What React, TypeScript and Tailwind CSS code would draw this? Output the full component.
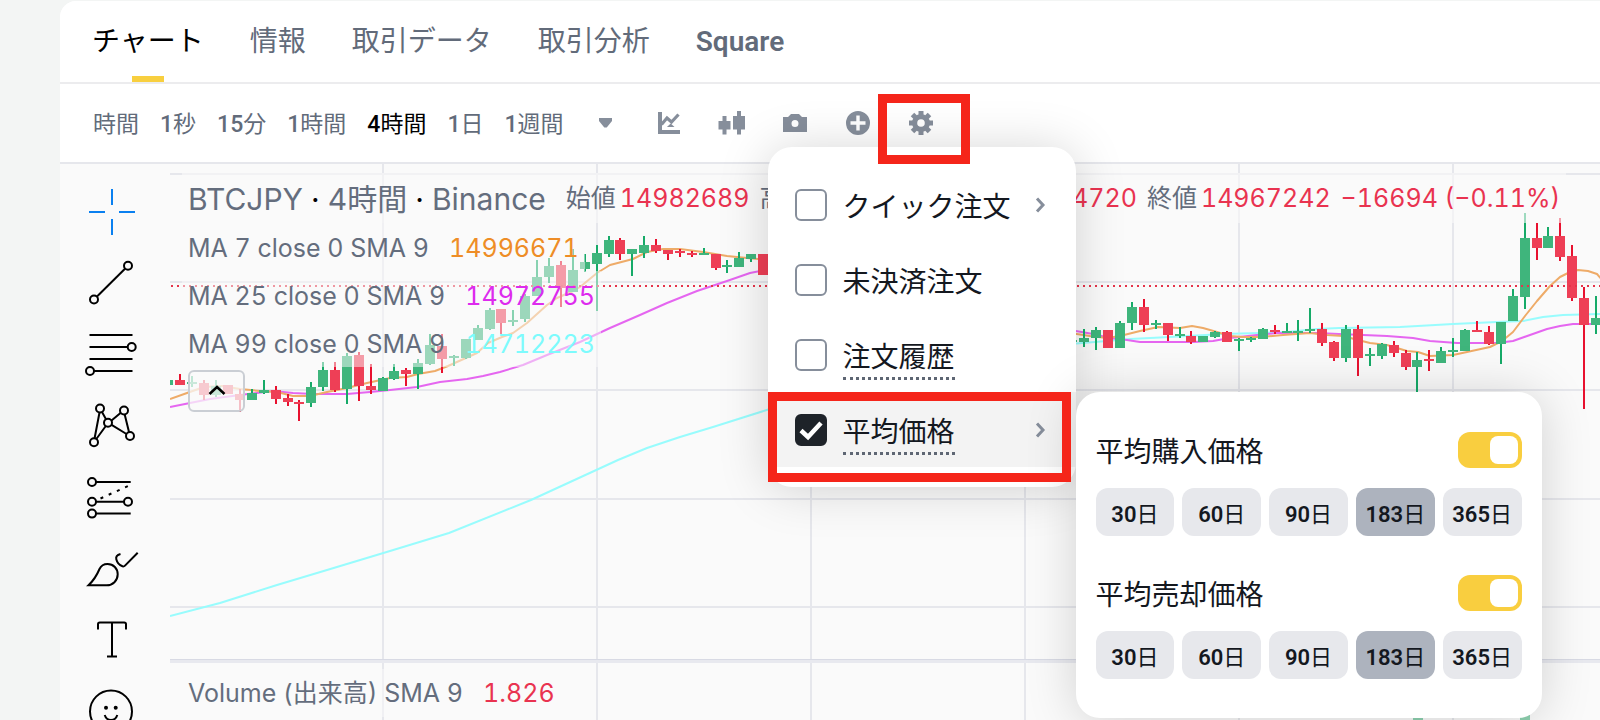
import { useState } from 'react';
import type { ReactNode } from 'react';
import { clsx } from 'clsx';

// center x, high, low, body top, body bottom, up?
type Candle = [number, number, number, number, number, 0 | 1];

const CANDLES: Candle[] = [
  [168, 380, 385, 380, 385, 1], [180, 374, 385, 380, 385, 0], [192, 376, 387, 382, 384, 1],
  [204, 380, 400, 383, 395, 0], [216, 380, 397, 386, 395, 1], [228, 385, 394, 385, 394, 0],
  [240, 389, 412, 394, 400, 0], [252, 389, 400, 393, 400, 1], [264, 380, 394, 390, 393, 1],
  [276, 386, 404, 390, 399, 0], [288, 394, 406, 398, 402, 0], [299, 400, 421, 402, 404, 0],
  [311, 382, 407, 387, 403, 1], [323, 362, 391, 370, 387, 1], [335, 362, 392, 370, 390, 0],
  [347, 353, 404, 356, 389, 1], [359, 352, 401, 355, 386, 0], [371, 364, 394, 386, 390, 0],
  [383, 377, 391, 378, 391, 1], [394, 364, 380, 371, 379, 1], [406, 368, 386, 370, 374, 0],
  [418, 359, 389, 363, 374, 1], [430, 334, 365, 345, 364, 1], [442, 334, 373, 346, 359, 0],
  [454, 355, 366, 356, 358, 1], [466, 339, 359, 339, 358, 1], [478, 325, 340, 328, 340, 1],
  [490, 308, 330, 310, 329, 1], [501, 309, 334, 309, 323, 0], [513, 310, 326, 320, 322, 1],
  [525, 294, 322, 296, 319, 1], [537, 260, 296, 277, 296, 1], [549, 258, 283, 266, 277, 1],
  [561, 261, 307, 265, 288, 0], [573, 249, 292, 270, 292, 1], [585, 254, 272, 262, 269, 1],
  [597, 245, 311, 253, 264, 1], [609, 236, 257, 240, 254, 1], [620, 238, 260, 240, 254, 0],
  [632, 249, 276, 249, 254, 1], [644, 236, 258, 245, 253, 1], [656, 239, 253, 245, 251, 0],
  [668, 250, 260, 250, 254, 0], [680, 249, 257, 251, 253, 0], [692, 251, 257, 253, 255, 0],
  [704, 248, 255, 253, 255, 1], [716, 254, 270, 254, 268, 0], [727, 260, 273, 265, 267, 1],
  [739, 252, 267, 258, 267, 1], [751, 254, 262, 254, 259, 1], [763, 254, 275, 254, 275, 0],
  [1072, 340, 342, 340, 342, 1], [1084, 329, 347, 338, 342, 1], [1096, 327, 350, 330, 338, 1],
  [1108, 330, 348, 330, 348, 0], [1120, 321, 348, 323, 348, 1], [1132, 302, 330, 307, 323, 1],
  [1144, 299, 332, 307, 325, 0], [1156, 320, 329, 323, 324, 1], [1168, 323, 341, 323, 335, 0],
  [1180, 327, 338, 334, 336, 1], [1191, 331, 344, 336, 342, 0], [1203, 336, 342, 336, 342, 1],
  [1215, 331, 338, 332, 337, 1], [1227, 331, 342, 332, 342, 0], [1239, 338, 351, 339, 341, 1],
  [1251, 337, 342, 338, 339, 1], [1263, 328, 339, 329, 339, 1], [1275, 325, 334, 330, 332, 0],
  [1287, 323, 333, 331, 332, 1], [1298, 320, 341, 331, 332, 1], [1310, 308, 333, 329, 330, 1],
  [1322, 323, 346, 329, 343, 0], [1334, 341, 361, 342, 358, 0], [1346, 325, 362, 329, 358, 1],
  [1358, 325, 376, 329, 358, 0], [1370, 348, 366, 354, 355, 1], [1382, 343, 359, 344, 356, 1],
  [1394, 341, 357, 345, 353, 0], [1406, 350, 370, 353, 367, 0], [1417, 352, 393, 360, 367, 1],
  [1429, 350, 371, 359, 361, 0], [1441, 347, 363, 351, 363, 1], [1453, 338, 357, 350, 351, 1],
  [1465, 329, 351, 330, 351, 1], [1477, 321, 331, 330, 331, 0], [1489, 326, 345, 332, 344, 0],
  [1501, 322, 364, 322, 344, 1], [1513, 289, 321, 296, 321, 1], [1525, 213, 309, 238, 297, 1],
  [1537, 223, 260, 238, 248, 0], [1548, 227, 248, 236, 248, 1], [1560, 218, 261, 236, 257, 0],
  [1572, 245, 301, 256, 298, 0], [1584, 287, 409, 298, 325, 0], [1596, 296, 334, 318, 325, 1],
];

const MA7 = [
  '170,399 187,393 204,387 222,386 240,389 260,391 277,392 293,396 310,396 327,392 347,388 367,383 390,378 407,377 418,374 435,371 448,366 477,353 488,343 502,337 513,333 527,323 547,305 557,298 573,291 580,287 597,273 610,265 633,259 647,252 663,249 680,249 703,252 727,256 747,258 770,260',
  '1070,333 1090,336 1107,338 1120,336 1140,331 1158,327 1180,328 1192,326 1203,328 1217,332 1230,336 1243,337 1260,337 1283,335 1310,333 1327,335 1343,336 1358,340 1370,343 1387,345 1407,351 1418,352 1430,356 1453,355 1467,352 1490,347 1502,341 1513,332 1525,316 1537,301 1550,286 1560,277 1568,273 1578,270 1588,271 1597,274 1604,282',
];
const MA25 = [
  '170,407 190,403 210,399 240,395 257,393 273,391 293,393 313,394 347,394 370,392 390,390 417,387 440,382 467,379 483,376 500,372 523,365 547,355 580,342 610,328 640,315 667,303 697,291 727,281 750,273 770,269',
  '1070,330 1093,334 1110,338 1127,340 1140,342 1193,342 1213,341 1230,338 1257,335 1277,333 1317,333 1339,334 1363,335 1387,336 1413,338 1430,341 1457,343 1497,343 1513,341 1530,335 1547,329 1560,326 1573,324 1604,324',
];
const MA99 = [
  '170,616 220,603 277,585 327,570 390,551 449,533 531,500 618,460 647,448 680,437 713,427 770,409',
  '1070,344 1107,341 1130,339 1170,337 1223,334 1260,333 1287,332 1317,329 1339,328 1400,327 1453,324 1497,322 1523,321 1543,317 1563,315 1604,314',
];

const TABS = ['チャート', '情報', '取引データ', '取引分析', 'Square'];

const INTERVALS = [
  { count: '', unit: '時間' },
  { count: '1', unit: '秒' },
  { count: '15', unit: '分' },
  { count: '1', unit: '時間' },
  { count: '4', unit: '時間' },
  { count: '1', unit: '日' },
  { count: '1', unit: '週間' },
];

const PERIODS = [30, 60, 90, 183, 365];

const AVERAGES = [
  { label: 'MA 7 close 0 SMA 9', value: '14996671', color: 'text-[#ee8d26]' },
  { label: 'MA 25 close 0 SMA 9', value: '14972755', color: 'text-[#dd2bee]' },
  { label: 'MA 99 close 0 SMA 9', value: '14712223', color: 'text-[#7dfbfd]' },
];

const OHLC = [
  { label: '始値', value: '14982689' },
  { label: '高値', value: '14991200' },
  { label: '安値', value: '14954720' },
  { label: '終値', value: '14967242' },
];

function PriceChart() {
  return (
    <svg className="absolute inset-0 h-full w-full" aria-hidden="true">
      <g transform="translate(-170 -164)">
        <g stroke="#e6e7ec" strokeWidth="2">
          {[383, 597, 811, 1025, 1239, 1453, 1667, 1881].map((x) => (
            <line key={x} x1={x} x2={x} y1="164" y2="1400" />
          ))}
          {[174, 282, 390, 499, 607].map((y) => (
            <line key={y} x1="170" x2="2600" y1={y} y2={y} />
          ))}
        </g>
        <rect x="170" y="659" width="2400" height="4" fill="#e8e9ef" />
        <rect x="170" y="659" width="2400" height="1" fill="#d8dae4" />
        <g fill="none" strokeWidth="2" strokeLinejoin="round">
          {MA99.map((points) => <polyline key={points} points={points} stroke="#98fcfd" />)}
          {MA25.map((points) => <polyline key={points} points={points} stroke="#e566f0" />)}
          {MA7.map((points) => <polyline key={points} points={points} stroke="#eeab68" />)}
        </g>
        {CANDLES.map(([x, high, low, top, bottom, up]) => (
          <g key={x} fill={up ? '#3fb57c' : '#ee3f56'}>
            <rect x={x - 1} y={high} width="2" height={low - high} fill={up ? '#16aa68' : '#e8112f'} />
            <rect x={x - 5} y={top} width="10" height={Math.max(bottom - top, 2)} />
          </g>
        ))}
        <g fill="#8fd2b1">
          <rect x="1413" y="717" width="10" height="80" />
          <rect x="1520" y="715" width="10" height="80" />
        </g>
        <line x1="171" x2="2600" y1="286" y2="286" stroke="#e5344a" strokeWidth="2" strokeDasharray="2 4" />
      </g>
    </svg>
  );
}

function DrawIcon({ label, children, active }: { label: string; children: ReactNode; active?: boolean }) {
  return (
    <button type="button" aria-label={label} className={clsx('shrink-0', active ? 'text-[#0a80f0]' : 'text-black')}>
      <svg className="size-14" viewBox="0 0 56 56" fill="none" stroke="currentColor" strokeWidth="2">
        {children}
      </svg>
    </button>
  );
}

function DrawingTools() {
  return (
    <aside className="flex w-[110px] shrink-0 flex-col items-center gap-[15px] pt-5 pr-1.5">
      <DrawIcon label="Crosshair" active>
        <path d="M28 5v16M28 35v16M5 28h16M35 28h16" />
      </DrawIcon>
      <DrawIcon label="Trend line">
        <path d="M13 41.5 41 13.7" />
        <circle cx="44" cy="10.7" r="4" />
        <circle cx="10" cy="44.5" r="4" />
      </DrawIcon>
      <DrawIcon label="Fibonacci">
        <path d="M5.5 9h43M5.5 21h38M5.5 33h43M10 45h38.5" />
        <circle cx="47.7" cy="21" r="4" />
        <circle cx="6" cy="45" r="4" />
      </DrawIcon>
      <DrawIcon label="Patterns">
        <path d="M10.6 41.3 15.5 15.5M18 15l4 7.2M27.5 23.5l9-7.5M40.7 17.5 45 35M27.6 27.8 42.5 37M21.8 29 12.3 42" />
        <circle cx="16" cy="11.5" r="4" />
        <circle cx="40" cy="13.5" r="4" />
        <circle cx="24" cy="25.7" r="4" />
        <circle cx="46" cy="39" r="4" />
        <circle cx="10" cy="45.3" r="4" />
      </DrawIcon>
      <DrawIcon label="Forecast">
        <path d="M12 14h34.7M12 33.7h28M12 45.6h34.7" />
        <path d="M16.5 30.5 44 18" strokeDasharray="3 6" />
        <circle cx="8" cy="14" r="4" />
        <circle cx="8" cy="33.7" r="4" />
        <circle cx="44" cy="33.7" r="4" />
        <circle cx="8" cy="45.6" r="4" />
      </DrawIcon>
      <DrawIcon label="Brush">
        <path d="M4.500 46.300C10 41 13 36 15.500 30c1.500-3.200 4.500-5 8-5 6 0 10.200 4.500 10.200 10.300 0 6.500-5 11-11 11z" />
        <path d="M36.500 15c-3 .8-4.800 2.800-4.200 5.300.7 3 3.500 6 6.200 7 1 .3 1.800 0 2.500-.7L53.700 13.700" />
      </DrawIcon>
      <DrawIcon label="Text">
        <path d="M14 19.500V14.300c0-1 .8-1.800 1.800-1.800h24.400c1 0 1.800.8 1.800 1.800v5.200M28 12.500v34M23 46.500h10" />
      </DrawIcon>
      <DrawIcon label="Emoji">
        <circle cx="27" cy="30.500" r="21" />
        <circle cx="22" cy="26.700" r="2" fill="currentColor" stroke="none" />
        <circle cx="31.700" cy="26.700" r="2" fill="currentColor" stroke="none" />
        <path d="M20.700 34c1 3.500 3.300 5 6.300 5s5.300-1.500 6.300-5" />
      </DrawIcon>
    </aside>
  );
}

function Legend() {
  return (
    <div className="relative flex h-[495px] flex-col items-start overflow-hidden pt-[9px] pl-3 text-[25px] whitespace-nowrap text-[#646d7d] tabular-nums">
      <div className="flex h-[50px] items-center bg-[#fafafa]/60 px-1.5 pt-0.5">
        <h1 className="mr-5 text-[30px]">
          BTCJPY <span className="text-black">·</span> 4時間 <span className="text-black">·</span> Binance
        </h1>
        {OHLC.map((item) => (
          <span key={item.label} className="mr-2.5 flex gap-1">
            {item.label}
            <span className="text-[#e93350]">{item.value}</span>
          </span>
        ))}
        <span className="text-[#e93350]">−16694 (−0.11%)</span>
      </div>
      {AVERAGES.map((ma) => (
        <div key={ma.value} className="flex h-12 items-center gap-5 bg-[#fafafa]/50 px-1.5 pt-1">
          <span>{ma.label}</span>
          <span className={ma.color}>{ma.value}</span>
        </div>
      ))}
      <button
        type="button"
        aria-label="Collapse indicators"
        className="mt-[3px] ml-1.5 flex h-[42px] w-[57px] items-center justify-center rounded-md border-2 border-[#caced4] bg-[#fafafa]/75 text-black"
      >
        <svg className="size-5" viewBox="0 0 20 20" fill="none" stroke="currentColor" strokeWidth="2.500">
          <path d="M2.500 13 10 6l7.500 7" />
        </svg>
      </button>
    </div>
  );
}

function AveragePriceGroup({ id, label }: { id: string; label: string }) {
  const [period, setPeriod] = useState(183);
  return (
    <div className="flex flex-col gap-5">
      <div className="flex h-9 items-center justify-between">
        <label htmlFor={id} className="pt-1.5 text-[28px]">{label}</label>
        <input
          id={id}
          type="checkbox"
          role="switch"
          defaultChecked
          className="relative h-9 w-16 appearance-none rounded-xl bg-[#d5d8dd] before:absolute before:top-1 before:left-1 before:size-7 before:rounded-lg before:bg-white checked:bg-[#f9ce3f] checked:before:left-8"
        />
      </div>
      <div className="grid grid-cols-5 gap-2">
        {PERIODS.map((days) => (
          <button
            key={days}
            type="button"
            onClick={() => setPeriod(days)}
            className={clsx(
              'h-12 rounded-xl pt-1 text-[22px]',
              days === period ? 'bg-[#adb3be]' : 'bg-[#e7e8ec]'
            )}
          >
            <span className="font-semibold">{days}</span>日
          </button>
        ))}
      </div>
    </div>
  );
}

interface MenuItemProps {
  id: string;
  label: string;
  checked?: boolean;
  hint?: boolean;
  arrow?: boolean;
  children?: ReactNode;
}

function MenuItem({ id, label, checked = false, hint = false, arrow = false, children }: MenuItemProps) {
  return (
    <li className={clsx('relative flex h-[75px] items-center pr-7 pl-[27px]', checked && 'bg-[#f3f3f3]')}>
      <span className="relative mr-4 size-8">
        <input
          id={id}
          type="checkbox"
          defaultChecked={checked}
          className="peer block size-8 appearance-none rounded-md border-2 border-[#868e9b] bg-white checked:border-[#1e2329] checked:bg-[#1e2329]"
        />
        <svg
          className="pointer-events-none absolute inset-0 hidden size-8 text-white peer-checked:block"
          viewBox="0 0 32 32"
          fill="none"
          stroke="currentColor"
          strokeWidth="4.500"
        >
          <path d="m6 16.500 7 6.500L26 9" />
        </svg>
      </span>
      <label
        htmlFor={id}
        className={clsx(
          'border-b-[3px] border-dotted pt-2 text-[28px] leading-[39px] whitespace-nowrap',
          hint ? 'border-[#5e6673]' : 'border-transparent'
        )}
      >
        {label}
      </label>
      {arrow && (
        <svg className="ml-auto size-4" viewBox="0 0 16 16" fill="none" stroke="#868e9b" strokeWidth="3">
          <path d="m5 1.500 6 6.500-6 6.500" />
        </svg>
      )}
      {children}
    </li>
  );
}

function SettingsMenu() {
  return (
    <ul className="absolute top-9 left-[-141px] z-10 w-[308px] rounded-3xl bg-white py-5 text-[#14181f] shadow-[0_2px_50px_rgba(0,0,0,0.17)]">
      <MenuItem id="quick-order" label="クイック注文" arrow />
      <MenuItem id="open-orders" label="未決済注文" />
      <MenuItem id="order-history" label="注文履歴" hint />
      <MenuItem id="average-price" label="平均価格" checked hint arrow>
        <div className="absolute top-0 left-full flex w-[466px] flex-col gap-[39px] rounded-3xl bg-white px-5 pt-10 pb-[39px] shadow-[0_2px_50px_rgba(0,0,0,0.17)]">
          <AveragePriceGroup id="average-buy" label="平均購入価格" />
          <AveragePriceGroup id="average-sell" label="平均売却価格" />
        </div>
        <div className="pointer-events-none absolute top-0 left-0 h-[90px] w-[303px] border-[9px] border-[#f5251a]" />
      </MenuItem>
    </ul>
  );
}

function Toolbar() {
  return (
    <div className="flex h-20 items-center border-b-2 border-[#e6e7ec] bg-white pl-[33px] text-[23px] whitespace-nowrap text-[#626b7a]">
      <div className="flex gap-[21px] pt-1">
        {INTERVALS.map(({ count, unit }) => (
          <button key={count + unit} type="button" className={clsx(count === '4' && 'text-black')}>
            <span className="font-medium">{count}</span>{unit}
          </button>
        ))}
      </div>
      <div className="ml-[30px] flex items-center gap-[39px] text-[#868e9b]">
        <button type="button" aria-label="More intervals">
          <svg className="size-6" viewBox="0 0 24 24" fill="currentColor">
            <path d="M5 7h13v3l-5.300 6.500h-2.400L5 10z" />
          </svg>
        </button>
        <button type="button" aria-label="Indicators">
          <svg className="size-6" viewBox="0 0 24 24" fill="currentColor">
            <path d="M1 1h4v18h18v4H1z" />
            <path d="m4.500 13.500 5.500-6.500 4.500 4 7-7.500" fill="none" stroke="currentColor" strokeWidth="3.200" />
            <path d="m13.700 12.500 3.800 3.500h-7.600z" />
          </svg>
        </button>
        <button type="button" aria-label="Chart style">
          <svg className="size-6 overflow-visible" viewBox="0 0 24 24" fill="currentColor">
            <path d="M-1.500 10h4V5H6.500v5h4v8.500h-4v5h-4v-5h-4zM13 5h4V0h4v5h4v13.500h-4v5h-4v-5h-4z" />
          </svg>
        </button>
        <button type="button" aria-label="Screenshot">
          <svg className="size-6" viewBox="0 0 24 24" fill="currentColor" fillRule="evenodd">
            <path d="M0 6h5l3-3h8l3 3h5v15H0zM12 9a3.500 3.500 0 1 0 0 7 3.500 3.500 0 0 0 0-7z" />
          </svg>
        </button>
        <button type="button" aria-label="Add">
          <svg className="size-6" viewBox="0 0 24 24" fill="currentColor" fillRule="evenodd">
            <path d="M12 0a12 12 0 1 0 0 24 12 12 0 0 0 0-24zM10.300 4.500h3.400v5.800h5.800v3.400h-5.800v5.800h-3.400v-5.800H4.500v-3.400h5.800z" />
          </svg>
        </button>
        <div className="relative flex">
          <button type="button" aria-label="Settings">
            <svg className="size-6" viewBox="0 0 24 24">
              <g fill="currentColor">
                <circle cx="12" cy="12" r="9" />
                <path d="M9.500 0h5v24h-5z" />
                <path d="M9.500 0h5v24h-5z" transform="rotate(45 12 12)" />
                <path d="M9.500 0h5v24h-5z" transform="rotate(90 12 12)" />
                <path d="M9.500 0h5v24h-5z" transform="rotate(135 12 12)" />
              </g>
              <circle cx="12" cy="12" r="3.800" fill="#fff" />
            </svg>
          </button>
          <SettingsMenu />
          <div className="pointer-events-none absolute top-[-17px] left-[-31px] z-20 h-[70px] w-[92px] border-[9px] border-[#f5251a]" />
        </div>
      </div>
    </div>
  );
}

export default function App() {
  return (
    <div className="h-screen overflow-hidden bg-[#f3f5f4] pt-px pl-[60px] font-['Inter','Noto_Sans_CJK_JP',sans-serif]">
      <main className="flex h-full flex-col rounded-tl-2xl bg-[#fafafa]">
        <div className="font-['Roboto','Noto_Sans_CJK_JP',sans-serif]">
          <nav className="flex h-[83px] gap-[46px] rounded-tl-2xl border-b-2 border-[#ececee] bg-white pl-8 whitespace-nowrap">
            {TABS.map((tab, i) => (
              <a
                key={tab}
                href="#"
                className={clsx(
                  'relative flex items-center text-[28px]',
                  i === 0 ? 'text-black' : 'text-[#626b7a]',
                  tab === 'Square' && 'font-semibold'
                )}
              >
                {tab}
                {i === 0 && <span className="absolute bottom-0 left-1/2 h-1.5 w-8 -translate-x-1/2 bg-[#f8cf3f]" />}
              </a>
            ))}
          </nav>
          <Toolbar />
        </div>
        <div className="flex min-h-0 flex-1 overflow-hidden">
          <DrawingTools />
          <section className="relative min-w-0 flex-1">
            <PriceChart />
            <Legend />
            <div className="relative mt-2.5 ml-3 flex h-12 w-fit items-center gap-5 bg-[#fafafa]/50 px-1.5 pt-0.5 text-[25px] text-[#646d7d] tabular-nums">
              <span>Volume (出来高) SMA 9</span>
              <span className="text-[#e93350]">1.826</span>
            </div>
          </section>
        </div>
      </main>
    </div>
  );
}
